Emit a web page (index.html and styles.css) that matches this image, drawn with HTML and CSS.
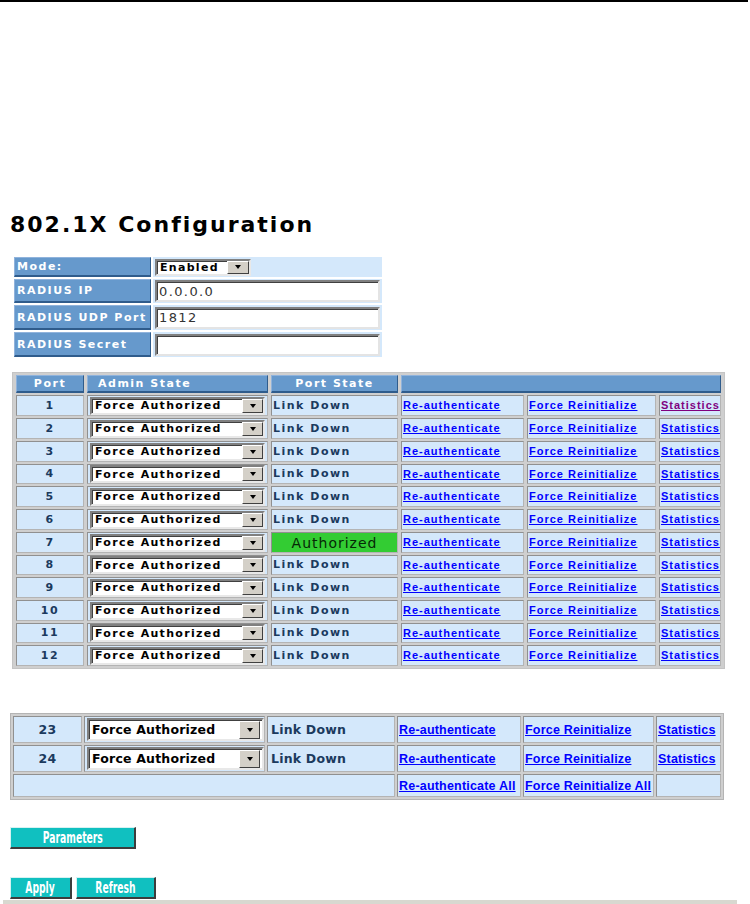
FILE: index.html
```html
<!DOCTYPE html>
<html>
<head>
<meta charset="utf-8">
<title>802.1X Configuration</title>
<link rel="stylesheet" href="styles.css">
</head>
<body>
<div class="topline"></div>
<h1 class="title">802.1X Configuration</h1>

<table class="cfg">
  <tr class="r-mode">
    <td class="lbl">Mode:</td>
    <td class="val"><div class="sel sel-mode"><span class="sel-text">Enabled</span><span class="arrow"></span></div></td>
  </tr>
  <tr class="r-a">
    <td class="lbl">RADIUS IP</td>
    <td class="val"><input class="txt" type="text" value="0.0.0.0"></td>
  </tr>
  <tr class="r-b">
    <td class="lbl">RADIUS UDP Port</td>
    <td class="val"><input class="txt" type="text" value="1812"></td>
  </tr>
  <tr class="r-b">
    <td class="lbl">RADIUS Secret</td>
    <td class="val"><input class="txt" type="text" value=""></td>
  </tr>
</table>

<table class="ports">
  <colgroup><col class="c1"><col class="c2"><col class="c3"><col class="c4"><col class="c5"><col class="c6"></colgroup>
  <tr>
    <th>Port</th>
    <th class="left">Admin State</th>
    <th>Port State</th>
    <th colspan="3"></th>
  </tr>
  <tr><td class="num">1</td><td class="adm"><div class="sel sel-p"><span class="sel-text">Force Authorized</span><span class="arrow"></span></div></td><td>Link Down</td><td><a href="#">Re-authenticate</a></td><td><a href="#">Force Reinitialize</a></td><td><a href="#" class="visited">Statistics</a></td></tr>
  <tr><td class="num">2</td><td class="adm"><div class="sel sel-p"><span class="sel-text">Force Authorized</span><span class="arrow"></span></div></td><td>Link Down</td><td><a href="#">Re-authenticate</a></td><td><a href="#">Force Reinitialize</a></td><td><a href="#">Statistics</a></td></tr>
  <tr><td class="num">3</td><td class="adm"><div class="sel sel-p"><span class="sel-text">Force Authorized</span><span class="arrow"></span></div></td><td>Link Down</td><td><a href="#">Re-authenticate</a></td><td><a href="#">Force Reinitialize</a></td><td><a href="#">Statistics</a></td></tr>
  <tr class="s"><td class="num">4</td><td class="adm"><div class="sel sel-p"><span class="sel-text">Force Authorized</span><span class="arrow"></span></div></td><td>Link Down</td><td><a href="#">Re-authenticate</a></td><td><a href="#">Force Reinitialize</a></td><td><a href="#">Statistics</a></td></tr>
  <tr><td class="num">5</td><td class="adm"><div class="sel sel-p"><span class="sel-text">Force Authorized</span><span class="arrow"></span></div></td><td>Link Down</td><td><a href="#">Re-authenticate</a></td><td><a href="#">Force Reinitialize</a></td><td><a href="#">Statistics</a></td></tr>
  <tr><td class="num">6</td><td class="adm"><div class="sel sel-p"><span class="sel-text">Force Authorized</span><span class="arrow"></span></div></td><td>Link Down</td><td><a href="#">Re-authenticate</a></td><td><a href="#">Force Reinitialize</a></td><td><a href="#">Statistics</a></td></tr>
  <tr><td class="num">7</td><td class="adm"><div class="sel sel-p"><span class="sel-text">Force Authorized</span><span class="arrow"></span></div></td><td class="auth">Authorized</td><td><a href="#">Re-authenticate</a></td><td><a href="#">Force Reinitialize</a></td><td><a href="#">Statistics</a></td></tr>
  <tr class="s"><td class="num">8</td><td class="adm"><div class="sel sel-p"><span class="sel-text">Force Authorized</span><span class="arrow"></span></div></td><td>Link Down</td><td><a href="#">Re-authenticate</a></td><td><a href="#">Force Reinitialize</a></td><td><a href="#">Statistics</a></td></tr>
  <tr><td class="num">9</td><td class="adm"><div class="sel sel-p"><span class="sel-text">Force Authorized</span><span class="arrow"></span></div></td><td>Link Down</td><td><a href="#">Re-authenticate</a></td><td><a href="#">Force Reinitialize</a></td><td><a href="#">Statistics</a></td></tr>
  <tr><td class="num">10</td><td class="adm"><div class="sel sel-p"><span class="sel-text">Force Authorized</span><span class="arrow"></span></div></td><td>Link Down</td><td><a href="#">Re-authenticate</a></td><td><a href="#">Force Reinitialize</a></td><td><a href="#">Statistics</a></td></tr>
  <tr class="s"><td class="num">11</td><td class="adm"><div class="sel sel-p"><span class="sel-text">Force Authorized</span><span class="arrow"></span></div></td><td>Link Down</td><td><a href="#">Re-authenticate</a></td><td><a href="#">Force Reinitialize</a></td><td><a href="#">Statistics</a></td></tr>
  <tr><td class="num">12</td><td class="adm"><div class="sel sel-p"><span class="sel-text">Force Authorized</span><span class="arrow"></span></div></td><td>Link Down</td><td><a href="#">Re-authenticate</a></td><td><a href="#">Force Reinitialize</a></td><td><a href="#">Statistics</a></td></tr>
</table>

<table class="ports2">
  <colgroup><col class="d1"><col class="d2"><col class="d3"><col class="d4"><col class="d5"><col class="d6"></colgroup>
  <tr class="tall"><td class="num">23</td><td class="adm"><div class="sel sel-q"><span class="sel-text">Force Authorized</span><span class="arrow"></span></div></td><td class="st">Link Down</td><td><a href="#">Re-authenticate</a></td><td><a href="#">Force Reinitialize</a></td><td><a href="#">Statistics</a></td></tr>
  <tr class="tall"><td class="num">24</td><td class="adm"><div class="sel sel-q"><span class="sel-text">Force Authorized</span><span class="arrow"></span></div></td><td class="st">Link Down</td><td><a href="#">Re-authenticate</a></td><td><a href="#">Force Reinitialize</a></td><td><a href="#">Statistics</a></td></tr>
  <tr class="short"><td colspan="3"></td><td><a href="#">Re-authenticate All</a></td><td><a href="#">Force Reinitialize All</a></td><td></td></tr>
</table>

<div class="params-row"><button class="btn btn-params" type="button"><span class="btn-label">Parameters</span></button></div>
<div class="actions"><button class="btn btn-apply" type="button"><span class="btn-label">Apply</span></button><button class="btn btn-refresh" type="button"><span class="btn-label">Refresh</span></button></div>
<div class="bottombar"></div>
</body>
</html>
```
FILE: styles.css
```css
* { box-sizing: border-box; }
body { margin: 0; background: #fff; font-family: "DejaVu Sans", Verdana, sans-serif; }

.topline { width: 748px; height: 2px; background: #000; }

.title {
  margin: 210px 0 0 10px;
  font: bold 22px/25px "DejaVu Sans", Verdana, sans-serif;
  letter-spacing: 2px;
  color: #000;
}

table { border-collapse: separate; }

/* config table */
.cfg { margin: 18px 0 0 12px; border-spacing: 2px; }
.cfg td { padding: 0; }
.cfg .lbl {
  width: 137px;
  background: #6699cc;
  color: #fff;
  font: bold 11px "DejaVu Sans", Verdana, sans-serif;
  letter-spacing: 1.5px;
  padding-left: 2px;
  white-space: nowrap;
  border: 1px solid;
  border-color: #90b3dc #2f5c8c #2f5c8c #90b3dc;
  border-bottom-width: 2px;
  vertical-align: middle;
}
.cfg .val { width: 229px; background: #d4e8fb; padding: 1px 2px; vertical-align: middle; }
.r-mode td { height: 20px; }
.r-a td { height: 24px; }
.r-b td { height: 25px; }

.txt {
  display: block;
  width: 225px;
  height: 22px;
  border: 2px solid;
  border-color: #808080 #e4e4e4 #e4e4e4 #808080;
  box-shadow: inset 1px 1px 0 #404040;
  background: #fff;
  padding: 0 2px;
  font: 13px "DejaVu Sans", Verdana, sans-serif;
  letter-spacing: 1.4px;
  color: #333;
  outline: none;
}

/* fake select */
.sel {
  display: flex;
  align-items: center;
  background: #fff;
  border: 2px solid;
  border-color: #808080 #e8e8e8 #e8e8e8 #808080;
  box-shadow: inset 1px 1px 0 #404040;
}
.sel-text {
  flex: 1;
  padding-left: 3px;
  font: bold 11px "DejaVu Sans", Verdana, sans-serif;
  letter-spacing: 1.3px;
  color: #000;
  white-space: nowrap;
  overflow: hidden;
}
.arrow {
  width: 21px;
  height: 15px;
  background: #d4d0c8;
  border: 1px solid;
  border-color: #ffffff #404040 #404040 #ffffff;
  display: flex;
  align-items: center;
  justify-content: center;
}
.arrow::after {
  content: "";
  border-left: 3.5px solid transparent;
  border-right: 3.5px solid transparent;
  border-top: 4px solid #000;
}
.sel-mode { width: 96px; height: 17px; }
.sel-mode .arrow { width: 22px; height: 13px; }
.sel-p { width: 175px; height: 18px; }
.sel-p .arrow { width: 21px; height: 14px; }
.sel-q { width: 177px; height: 23px; }
.sel-q .arrow { width: 21px; height: 18px; margin-right: 2px; }
.sel-q .sel-text { font: bold 12.5px "DejaVu Sans", Verdana, sans-serif; letter-spacing: 0.2px; padding-left: 3px; }

/* port table */
.ports {
  margin: 13px 0 0 12px;
  width: 713px;
  table-layout: fixed;
  border: 1px solid #c4c4c4;
  border-spacing: 3px 2px;
  background: #cfcfcf;
}
.ports th {
  height: 18px;
  padding: 0;
  background: #6699cc;
  color: #fff;
  font: bold 11px "DejaVu Sans", Verdana, sans-serif;
  letter-spacing: 1.5px;
  text-align: center;
  white-space: nowrap;
  border: 1px solid;
  border-color: #90b3dc #2f5c8c #2f5c8c #90b3dc;
  border-bottom-width: 2px;
}
.ports th.left { text-align: left; padding-left: 10px; }
.ports td {
  height: 21px;
  padding: 0 1px;
  background: #d4e8fb;
  border: 1px solid;
  border-color: #909090 #b4b4b4 #b4b4b4 #909090;
  font: bold 11px "DejaVu Sans", Verdana, sans-serif;
  line-height: 14px;
  letter-spacing: 1.5px;
  color: #1b3a5e;
  white-space: nowrap;
  overflow: hidden;
  vertical-align: middle;
}
.ports tr.s td { height: 20px; }
.ports td.adm { padding: 0 1px 0 2px; }
.ports td.num, .ports2 td.num { text-align: center; }
.ports td.auth {
  background: #33cc33;
  color: #062806;
  font: 14px/16px "DejaVu Sans", Verdana, sans-serif;
  letter-spacing: 1px;
  text-align: center;
}
.c1 { width: 68px; }
.c2 { width: 181px; }
.c3 { width: 127px; }
.c4 { width: 123px; }
.c5 { width: 129px; }
.c6 { width: 62px; }

.ports a {
  color: #0000ff;
  font: bold 11px/14px "Liberation Sans", Arial, sans-serif;
  letter-spacing: 1px;
  text-decoration: underline;
}
.ports a.visited { color: #800080; }

/* second table */
.ports2 {
  margin: 44px 0 0 10px;
  width: 714px;
  table-layout: fixed;
  border: 1px solid #b4b4b4;
  border-spacing: 2px;
  background: #cfcfcf;
}
.ports2 td {
  padding: 0 1px;
  background: #d4e8fb;
  border: 1px solid;
  border-color: #909090 #b4b4b4 #b4b4b4 #909090;
  font: bold 12.5px "DejaVu Sans", Verdana, sans-serif;
  letter-spacing: 0.2px;
  color: #1b3a5e;
  white-space: nowrap;
  overflow: hidden;
  vertical-align: middle;
}
.ports2 td.adm { padding: 0 2px; }
.ports2 td.st { padding-left: 3px; }
.ports2 .tall td { height: 27px; }
.ports2 .short td { height: 23px; }
.d1 { width: 69px; }
.d2 { width: 181px; }
.d3 { width: 128px; }
.d4 { width: 124px; }
.d5 { width: 131px; }
.d6 { width: 65px; }
.ports2 a {
  color: #0000ff;
  font: bold 12.5px "Liberation Sans", Arial, sans-serif;
  text-decoration: underline;
}

/* buttons */
.params-row { display: flex; margin: 27px 0 0 10px; }
.actions { display: flex; gap: 4px; margin: 28px 0 0 10px; }
.btn {
  height: 22px;
  padding: 0;
  background: #10c0c0;
  color: #fff;
  font: bold 16px/18px "DejaVu Sans Condensed", "DejaVu Sans", sans-serif;
  font-stretch: condensed;
  border-style: solid;
  border-width: 1px 2px 2px 1px;
  border-color: #d6f2f2 #3c3c3c #3c3c3c #d6f2f2;
  cursor: pointer;
  display: flex;
  align-items: center;
  justify-content: center;
  overflow: hidden;
}
.btn-label { display: inline-block; transform: scaleX(0.64); white-space: nowrap; }
.btn-params { width: 126px; }
.btn-apply { width: 62px; }
.btn-refresh { width: 80px; }

.bottombar { margin: 1px 0 0 3px; width: 734px; height: 5px; background: #d8d8d0; }
```
